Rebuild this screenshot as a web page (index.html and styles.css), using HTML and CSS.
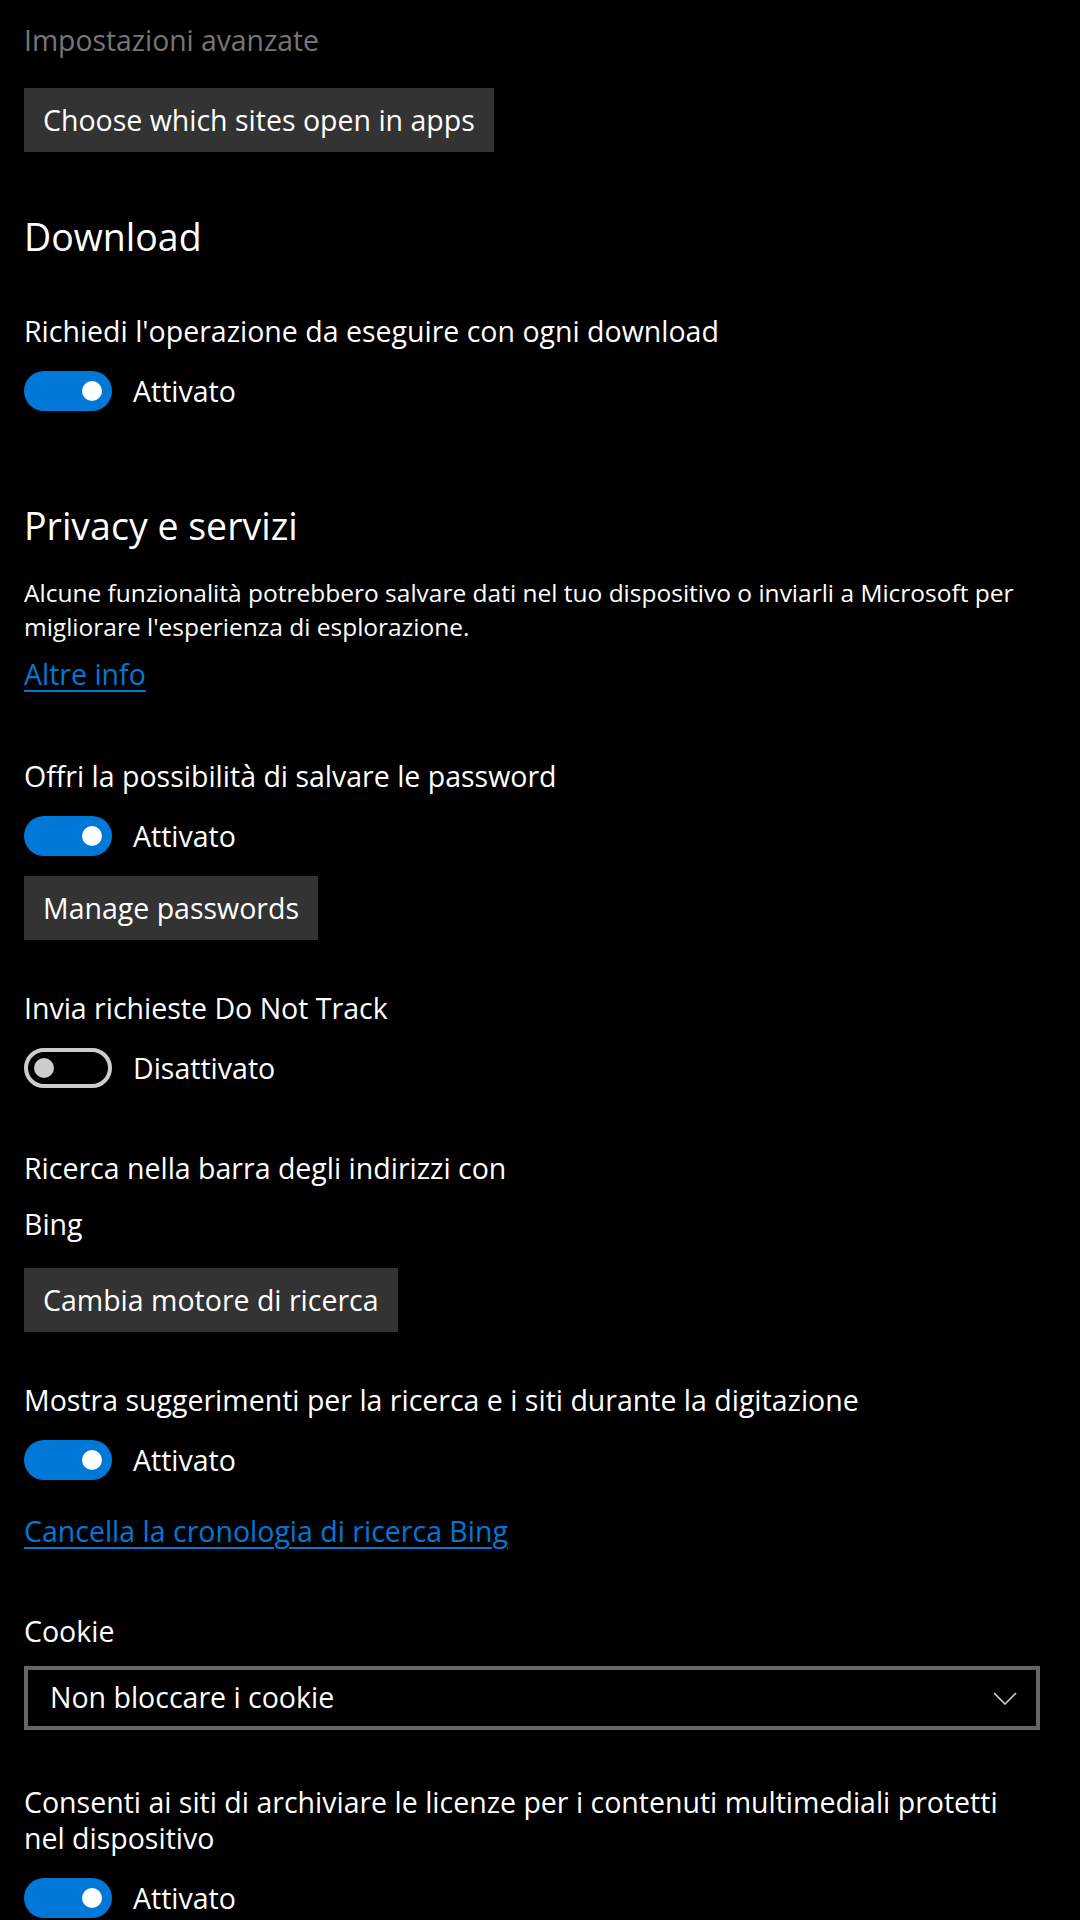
FILE: index.html
```html
<!DOCTYPE html>
<html lang="it">
<head>
<meta charset="utf-8">
<title>Impostazioni avanzate</title>
<link rel="stylesheet" href="styles.css">
</head>
<body>
<main class="page">
  <p class="caption">Impostazioni avanzate</p>
  <button class="btn btn-apps">Choose which sites open in apps</button>

  <h2 class="section-title title-download">Download</h2>
  <div class="label gap-after-title">Richiedi l'operazione da eseguire con ogni download</div>
  <div class="toggle-row"><span class="toggle on"><span class="knob"></span></span><span class="state">Attivato</span></div>

  <h2 class="section-title title-privacy">Privacy e servizi</h2>
  <p class="desc">Alcune funzionalità potrebbero salvare dati nel tuo dispositivo o inviarli a Microsoft per migliorare l'esperienza di esplorazione.</p>
  <a class="link link-info" href="#">Altre info</a>

  <div class="label group-start">Offri la possibilità di salvare le password</div>
  <div class="toggle-row"><span class="toggle on"><span class="knob"></span></span><span class="state">Attivato</span></div>
  <button class="btn btn-after-toggle">Manage passwords</button>

  <div class="label group-start-2">Invia richieste Do Not Track</div>
  <div class="toggle-row"><span class="toggle off"><span class="knob"></span></span><span class="state">Disattivato</span></div>

  <div class="label group-start-3">Ricerca nella barra degli indirizzi con</div>
  <div class="label value">Bing</div>
  <button class="btn btn-engine">Cambia motore di ricerca</button>

  <div class="label group-start-2">Mostra suggerimenti per la ricerca e i siti durante la digitazione</div>
  <div class="toggle-row"><span class="toggle on"><span class="knob"></span></span><span class="state">Attivato</span></div>
  <a class="link link-clear" href="#">Cancella la cronologia di ricerca Bing</a>

  <div class="label group-start-5">Cookie</div>
  <div class="select">
    <span class="select-text">Non bloccare i cookie</span>
    <svg class="chevron" width="24" height="13" viewBox="0 0 24 13"><path d="M1 1 L12 12 L23 1" fill="none" stroke="#d0d0d0" stroke-width="1.6"/></svg>
  </div>

  <div class="label group-start-4">Consenti ai siti di archiviare le licenze per i contenuti multimediali protetti nel dispositivo</div>
  <div class="toggle-row"><span class="toggle on"><span class="knob"></span></span><span class="state">Attivato</span></div>
</main>
</body>
</html>
```

FILE: styles.css
```css
html, body {
  margin: 0;
  padding: 0;
  background: #000;
}

body {
  color: #fff;
  font-family: "Open Sans", "Noto Sans", "DejaVu Sans", sans-serif;
  font-size: 28.5px;
  line-height: 36px;
  height: 1920px;
  overflow: hidden;
}

.page {
  padding: 20px 40px 0 24px;
  display: flex;
  flex-direction: column;
  align-items: flex-start;
}

.caption {
  margin: 0;
  font-size: 28.3px;
  line-height: 40px;
  color: #767676;
}

.btn {
  font: inherit;
  font-size: 28.5px;
  line-height: 64px;
  height: 64px;
  padding: 0 19px 0 19px;
  border: 0;
  background: #333333;
  color: #fff;
  white-space: nowrap;
}

.btn-apps { margin-top: 28px; }
.btn-after-toggle { margin-top: 20px; }
.btn-engine { margin-top: 26px; }

.section-title {
  margin: 0;
  font-weight: 400;
  font-size: 37.5px;
  line-height: 48px;
}

.title-download { margin-top: 61px; }
.title-privacy { margin-top: 91px; }

.label {
  margin: 0;
}

.gap-after-title { margin-top: 52px; }
.group-start { margin-top: 66px; }
.group-start-2 { margin-top: 50px; }
.group-start-3 { margin-top: 62px; }
.group-start-4 { margin-top: 54px; }
.group-start-5 { margin-top: 64px; }
.value { margin-top: 20px; }

.toggle-row {
  display: flex;
  align-items: center;
  gap: 21px;
  height: 40px;
  margin-top: 22px;
}

.toggle {
  box-sizing: border-box;
  width: 88px;
  height: 40px;
  border-radius: 20px;
  display: flex;
  align-items: center;
  padding: 0 10px;
  flex: none;
}

.toggle .knob {
  width: 20px;
  height: 20px;
  border-radius: 50%;
}

.toggle.on {
  background: #0078d7;
  justify-content: flex-end;
}

.toggle.on .knob { background: #fff; }

.toggle.off {
  border: 4px solid #cccccc;
  padding: 0 6px;
  justify-content: flex-start;
}

.toggle.off .knob { background: #cccccc; }

.state {
  line-height: 36px;
}

.desc {
  margin: 26px 0 0;
  font-size: 24.5px;
  line-height: 34px;
}

.link {
  color: #0078d7;
  text-decoration: underline;
  text-decoration-thickness: 2px;
  text-underline-offset: 5px;
}

.link-info { margin-top: 12px; }
.link-clear { margin-top: 33px; }

.select {
  box-sizing: border-box;
  align-self: stretch;
  margin-top: 17px;
  height: 64px;
  border: 4px solid #666666;
  display: flex;
  align-items: center;
  justify-content: space-between;
  padding: 0 19px 0 22px;
}

.select-text {
  line-height: 56px;
  position: relative;
  top: -1px;
}

.chevron { display: block; }
```
